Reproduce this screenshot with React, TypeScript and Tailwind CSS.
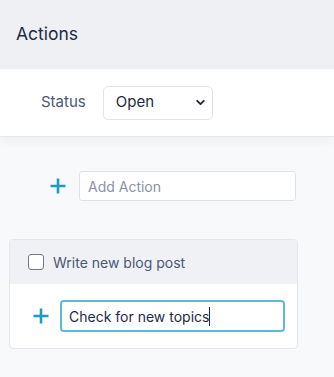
import { ChevronDown } from 'lucide-react';

function Plus({ size = 18 }: { size?: number }) {
  return (
    <svg width={size} height={size} viewBox="0 0 18 18" className="shrink-0">
      <path d="M9 1.5v15M1.5 9h15" stroke="#1b9cc2" strokeWidth="2.6" />
    </svg>
  );
}

export default function App() {
  return (
    <div className="w-[334px] h-[377px] bg-[#f8f9fa] font-['Inter',sans-serif] overflow-hidden">
      <div className="h-[69px] bg-[#eff0f3] flex items-center px-4">
        <h1 className="text-[17.5px] text-[#1e2a44]">Actions</h1>
      </div>

      <div className="h-[68px] bg-white flex items-center pl-[41px] gap-[17px] border-b border-[#e6e7ea] shadow-[0_4px_10px_rgba(0,0,0,0.05)]">
        <span className="text-[15px] text-[#4a5775]">Status</span>
        <div className="w-[110px] h-[34px] rounded-[5px] border border-[#e2e4e8] bg-white flex items-center justify-between pl-3 pr-[5px]">
          <span className="text-[15px] text-[#1e2a44]">Open</span>
          <ChevronDown size={13} strokeWidth={3.5} className="text-[#1e2a44]" />
        </div>
      </div>

      <div className="flex items-center gap-3 pl-[49px] mt-[34px]">
        <Plus size={18} />
        <div className="w-[217px] h-[30px] rounded-[3px] border border-[#dee1e6] bg-white flex items-center px-2">
          <span className="text-[14px] text-[#8a93a6]">Add Action</span>
        </div>
      </div>

      <div className="mx-[9px] mt-[38px] w-[289px] rounded-[4px] border border-[#e4e6ea] bg-white overflow-hidden">
        <div className="h-[44px] bg-[#f0f1f4] flex items-center pl-[18px] gap-[9px]">
          <span className="w-[16px] h-[16px] rounded-[3px] border-[1.5px] border-[#6e7891] bg-white" />
          <span className="text-[14px] text-[#4a5775]">Write new blog post</span>
        </div>
        <div className="flex items-center gap-[10px] pl-[22px] pt-[16px] pb-[16px]">
          <Plus size={18} />
          <div className="w-[225px] h-[32px] rounded-[4px] border-2 border-[#5bbcd8] bg-white flex items-center pl-[7px]">
            <span className="text-[14px] text-[#1e2a44]">Check for new topics</span>
            <span className="w-px h-[19px] bg-[#1e2a44]" />
          </div>
        </div>
      </div>
    </div>
  );
}
